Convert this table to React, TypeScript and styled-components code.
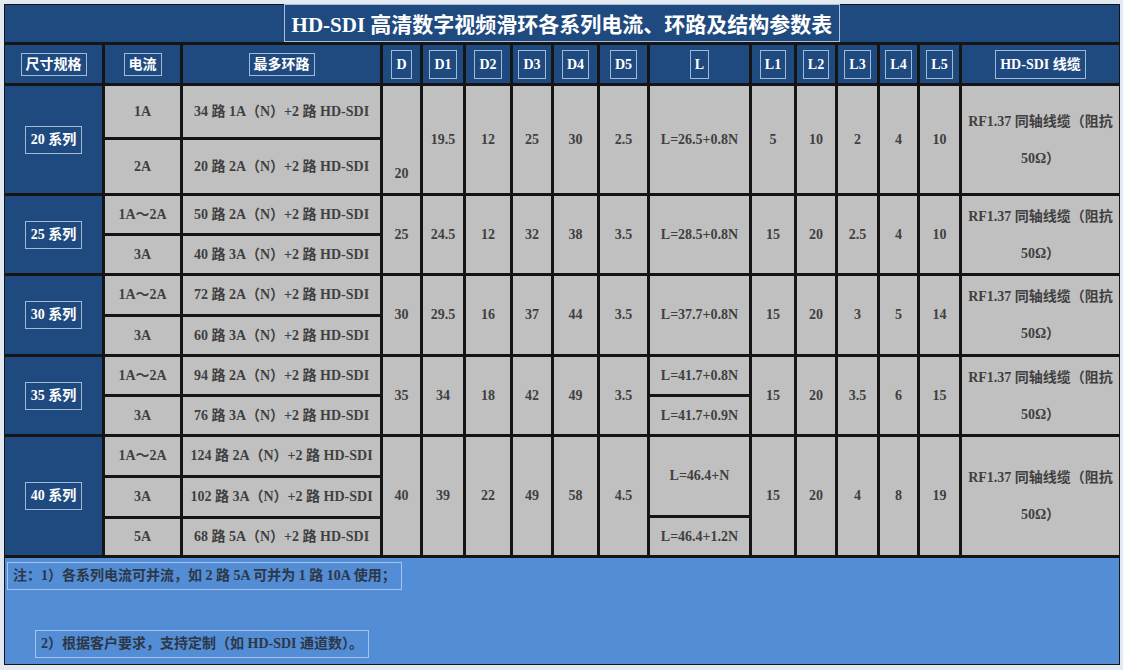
import React from "react";
import styled, { createGlobalStyle } from "styled-components";

const GlobalStyle = createGlobalStyle`
  html, body {
    margin: 0;
    padding: 0;
    background: #e3e9f1;
  }
  body {
    font-family: "Liberation Serif", "Noto Sans CJK SC", serif;
  }
`;

const NAVY = "#1f4a7f";
const GREY = "#c0c0c0";

const Page = styled.div`
  width: 1123px;
  height: 670px;
  padding: 4px 0 0 4px;
  box-sizing: border-box;
`;

const Table = styled.div`
  display: grid;
  grid-template-columns: 97px 75px 197px 37px 40px 44px 38px 43px 47px 99px 42px 38px 39px 37px 39px 157px;
  grid-template-rows: 37px 38px 51px 53px 37px 37px 38px 37px 37px 37px 38px 38px 36px 106px;
  gap: 3px;
  width: max-content;
  padding: 1px;
  background: #151515;
`;

interface Place {
  $col: number;
  $row: number;
  $cs?: number;
  $rs?: number;
}

const place = ({ $col, $row, $cs = 1, $rs = 1 }: Place) =>
  `grid-column: ${$col} / span ${$cs}; grid-row: ${$row} / span ${$rs};`;

const TitleBar = styled.div`
  grid-column: 1 / span 16;
  grid-row: 1;
  background: ${NAVY};
  display: flex;
  justify-content: center;
  align-items: stretch;
`;

const TitleBox = styled.div`
  display: flex;
  align-items: center;
  padding: 0 7px;
  margin-top: -1px;
  border: 1px solid #a9bedb;
  color: #fff;
  font-size: 21px;
  font-weight: bold;
  white-space: nowrap;
`;

const HeadCell = styled.div<Place>`
  ${place};
  background: ${NAVY};
  display: flex;
  align-items: center;
  justify-content: center;
`;

const Label = styled.span<{ $tall?: boolean }>`
  border: 1px solid #a3b9d8;
  color: #fff;
  font-size: 14px;
  font-weight: bold;
  padding: 0 4px;
  line-height: ${(p) => (p.$tall ? 27 : 21)}px;
  white-space: nowrap;
`;

const SeriesCell = styled.div<Place>`
  ${place};
  background: ${NAVY};
  display: flex;
  align-items: center;
  justify-content: center;
`;

const SeriesLabel = styled.span`
  border: 1px solid #a3b9d8;
  color: #fff;
  font-size: 14px;
  font-weight: bold;
  padding: 0 5px;
  line-height: 26px;
  white-space: nowrap;
`;

const DataCell = styled.div<Place & { $bottom?: boolean; $lh?: number }>`
  ${place};
  background: ${GREY};
  color: #404040;
  font-size: 14px;
  font-weight: bold;
  display: flex;
  justify-content: center;
  align-items: ${(p) => (p.$bottom ? "flex-end" : "center")};
  padding-bottom: ${(p) => (p.$bottom ? "10px" : "0")};
  text-align: center;
  line-height: ${(p) => p.$lh ?? 18}px;
  white-space: nowrap;
`;

const SplitCell = styled.div<Place>`
  ${place};
  display: flex;
  flex-direction: column;
  gap: 3px;
`;

const SplitPart = styled.div<{ $grow: number }>`
  flex: ${(p) => p.$grow} 1 0;
  background: ${GREY};
  color: #404040;
  font-size: 14px;
  font-weight: bold;
  display: flex;
  align-items: center;
  justify-content: center;
  white-space: nowrap;
`;

const NoteArea = styled.div`
  grid-column: 1 / span 16;
  grid-row: 14;
  background: #538dd5;
  display: flex;
  flex-direction: column;
  align-items: flex-start;
  padding: 4px 0 0 2px;
`;

const NoteLine = styled.div<{ $indent?: number; $gap?: number }>`
  margin-left: ${(p) => p.$indent ?? 0}px;
  margin-top: ${(p) => p.$gap ?? 0}px;
  border: 1px solid #a9c4ec;
  color: #2d3746;
  font-size: 14px;
  font-weight: bold;
  line-height: 26px;
  padding: 0 5px;
  white-space: nowrap;
`;

const headers: { text: string; tall?: boolean }[] = [
  { text: "尺寸规格" },
  { text: "电流" },
  { text: "最多环路" },
  { text: "D", tall: true },
  { text: "D1", tall: true },
  { text: "D2", tall: true },
  { text: "D3", tall: true },
  { text: "D4", tall: true },
  { text: "D5", tall: true },
  { text: "L", tall: true },
  { text: "L1", tall: true },
  { text: "L2", tall: true },
  { text: "L3", tall: true },
  { text: "L4", tall: true },
  { text: "L5", tall: true },
  { text: "HD-SDI 线缆", tall: true },
];

type Series = {
  name: string;
  rows: [string, string][];
  dims: string[];
  l: string[];
  lGrow?: number[];
  ls: string[];
  dBottom?: boolean;
};

const series: Series[] = [
  {
    name: "20 系列",
    rows: [
      ["1A", "34 路 1A（N）+2 路 HD-SDI"],
      ["2A", "20 路 2A（N）+2 路 HD-SDI"],
    ],
    dims: ["20", "19.5", "12", "25", "30", "2.5"],
    l: ["L=26.5+0.8N"],
    ls: ["5", "10", "2", "4", "10"],
    dBottom: true,
  },
  {
    name: "25 系列",
    rows: [
      ["1A～2A", "50 路 2A（N）+2 路 HD-SDI"],
      ["3A", "40 路 3A（N）+2 路 HD-SDI"],
    ],
    dims: ["25", "24.5", "12", "32", "38", "3.5"],
    l: ["L=28.5+0.8N"],
    ls: ["15", "20", "2.5", "4", "10"],
  },
  {
    name: "30 系列",
    rows: [
      ["1A～2A", "72 路 2A（N）+2 路 HD-SDI"],
      ["3A", "60 路 3A（N）+2 路 HD-SDI"],
    ],
    dims: ["30", "29.5", "16", "37", "44", "3.5"],
    l: ["L=37.7+0.8N"],
    ls: ["15", "20", "3", "5", "14"],
  },
  {
    name: "35 系列",
    rows: [
      ["1A～2A", "94 路 2A（N）+2 路 HD-SDI"],
      ["3A", "76 路 3A（N）+2 路 HD-SDI"],
    ],
    dims: ["35", "34", "18", "42", "49", "3.5"],
    l: ["L=41.7+0.8N", "L=41.7+0.9N"],
    ls: ["15", "20", "3.5", "6", "15"],
  },
  {
    name: "40 系列",
    rows: [
      ["1A～2A", "124 路 2A（N）+2 路 HD-SDI"],
      ["3A", "102 路 3A（N）+2 路 HD-SDI"],
      ["5A", "68 路 5A（N）+2 路 HD-SDI"],
    ],
    dims: ["40", "39", "22", "49", "58", "4.5"],
    l: ["L=46.4+N", "L=46.4+1.2N"],
    lGrow: [78, 37],
    ls: ["15", "20", "4", "8", "19"],
  },
];

const SeriesBlock = ({ s, start }: { s: Series; start: number }) => {
  const span = s.rows.length;
  return (
    <>
      <SeriesCell $col={1} $row={start} $rs={span}>
        <SeriesLabel>{s.name}</SeriesLabel>
      </SeriesCell>
      {s.rows.map(([cur, loops], i) => (
        <React.Fragment key={cur + i}>
          <DataCell $col={2} $row={start + i}>
            {cur}
          </DataCell>
          <DataCell $col={3} $row={start + i}>
            {loops}
          </DataCell>
        </React.Fragment>
      ))}
      {s.dims.map((d, i) => (
        <DataCell
          key={"d" + i}
          $col={4 + i}
          $row={start}
          $rs={span}
          $bottom={i === 0 && s.dBottom}
        >
          {d}
        </DataCell>
      ))}
      {s.lGrow ? (
        <SplitCell $col={10} $row={start} $rs={span}>
          {s.l.map((t, i) => (
            <SplitPart key={t} $grow={s.lGrow![i]}>
              {t}
            </SplitPart>
          ))}
        </SplitCell>
      ) : s.l.length === span ? (
        s.l.map((t, i) => (
          <DataCell key={t} $col={10} $row={start + i}>
            {t}
          </DataCell>
        ))
      ) : (
        <DataCell $col={10} $row={start} $rs={span}>
          {s.l[0]}
        </DataCell>
      )}
      {s.ls.map((v, i) => (
        <DataCell key={"l" + i} $col={11 + i} $row={start} $rs={span}>
          {v}
        </DataCell>
      ))}
      <DataCell $col={16} $row={start} $rs={span} $lh={37}>
        <div>
          RF1.37 同轴线缆（阻抗
          <br />
          50Ω）
        </div>
      </DataCell>
    </>
  );
};

export default function App() {
  let row = 3;
  const blocks = series.map((s) => {
    const start = row;
    row += s.rows.length;
    return <SeriesBlock key={s.name} s={s} start={start} />;
  });

  return (
    <Page>
      <GlobalStyle />
      <Table>
        <TitleBar>
          <TitleBox>HD-SDI 高清数字视频滑环各系列电流、环路及结构参数表</TitleBox>
        </TitleBar>
        {headers.map((h, i) => (
          <HeadCell key={h.text} $col={i + 1} $row={2}>
            <Label $tall={h.tall}>{h.text}</Label>
          </HeadCell>
        ))}
        {blocks}
        <NoteArea>
          <NoteLine>注：1）各系列电流可并流，如 2 路 5A 可并为 1 路 10A 使用；</NoteLine>
          <NoteLine $indent={28} $gap={40}>
            2）根据客户要求，支持定制（如 HD-SDI 通道数）。
          </NoteLine>
        </NoteArea>
      </Table>
    </Page>
  );
}
